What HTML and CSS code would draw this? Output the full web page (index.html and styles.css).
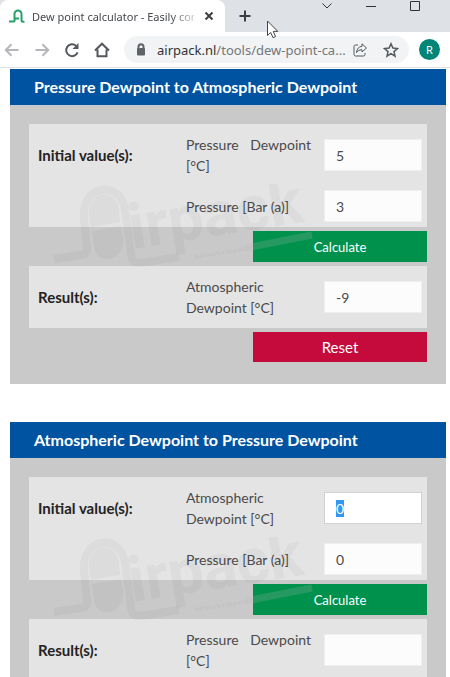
FILE: index.html
```html
<!DOCTYPE html>
<html lang="en">
<head>
<meta charset="utf-8">
<meta name="viewport" content="width=device-width, initial-scale=1">
<title>Dew point calculator</title>
<link rel="stylesheet" href="styles.css">
</head>
<body>
<header class="browser">
  <div class="tabstrip">
    <div class="tab">
      <svg class="favicon" viewBox="0 0 16 16" aria-hidden="true"><path d="M0 13.500h4.500Q6 13.500 5.500 11.500V6a3.500 3.500 0 0 1 7 0v6.500q0 1.500 3 1.200M5.500 10.500h4.500"/></svg>
      <span class="tab-title">Dew point calculator - Easily con</span>
      <button class="icon-button tab-close" aria-label="Close tab"><svg viewBox="0 0 16 16"><path d="M4.500 4.500l7 7M11.500 4.500l-7 7"/></svg></button>
    </div>
    <button class="icon-button new-tab" aria-label="New tab"><svg viewBox="0 0 16 16"><path d="M8 2.500v11M2.500 8h11"/></svg></button>
    <div class="window-controls">
      <button class="icon-button" aria-label="Search tabs"><svg viewBox="0 0 16 16"><path d="M3.500 5.500L8 10l4.500-4.500"/></svg></button>
      <button class="icon-button" aria-label="Minimize"><svg viewBox="0 0 16 16"><path d="M3 8.500h10"/></svg></button>
      <button class="icon-button" aria-label="Maximize"><svg viewBox="0 0 16 16"><path d="M3.500 3.500h9v9h-9z"/></svg></button>
    </div>
    <svg class="pointer" viewBox="0 0 14 20" aria-hidden="true"><path d="M1.500 1v14.500l3.200-3 2.300 5.200 2.600-1.100-2.300-5.200h4.500z"/></svg>
  </div>
  <nav class="toolbar" aria-label="Browser">
    <button class="icon-button nav-button muted" aria-label="Back"><svg viewBox="0 0 16 16"><path d="M14.500 8H2M7.500 2.300L1.800 8l5.700 5.700"/></svg></button>
    <button class="icon-button nav-button muted" aria-label="Forward"><svg viewBox="0 0 16 16"><path d="M1.500 8H14M8.500 2.300L14.200 8l-5.700 5.700"/></svg></button>
    <button class="icon-button nav-button" aria-label="Reload"><svg viewBox="0 0 16 16"><path class="bold" d="M13.600 10.300A5.900 5.900 0 1 1 12 3.800"/><path class="solid" d="M14.500 1v6H8.500z"/></svg></button>
    <button class="icon-button nav-button" aria-label="Home"><svg viewBox="0 0 16 16"><path class="bold" d="M1 8.500L8 1.700l7 6.800M3.500 7.500v6.700h9V7.500"/></svg></button>
    <div class="address">
      <svg class="lock" viewBox="0 0 10 14" aria-hidden="true"><path class="shackle" d="M2.500 6V3.800a2.500 2.500 0 0 1 5 0V6"/><rect x="1" y="5" width="8" height="7.500" rx="1"/></svg>
      <span class="url"><span class="host">airpack.nl</span>/tools/dew-point-ca...</span>
      <button class="icon-button" aria-label="Share"><svg viewBox="0 0 16 16"><path d="M6 3H3.500Q2 3 2 4.500v8Q2 14 3.500 14h8q1.500 0 1.500-1.500V11M10 1.800L14.500 6 10 10V7.700Q6.500 7.500 4.500 10.500 5 5 10 4.300z"/></svg></button>
      <button class="icon-button" aria-label="Bookmark"><svg viewBox="0 0 16 16"><path class="star" d="M8 1.800l1.900 4.300 4.600.4L11 9.600l1 4.600-4-2.500-4 2.500 1-4.600-3.500-3.100 4.600-.4z"/></svg></button>
    </div>
    <button class="avatar" aria-label="Profile">R</button>
  </nav>
</header>

<svg class="symbols" aria-hidden="true">
  <symbol id="watermark" viewBox="0 0 270 84">
    <path class="mark-line" d="M2 75L29 71Q36 70 35 63L32 35C29 1 67-5 73 25L79 70Q80 80 88 79L127 73"/>
    <path class="mark-fill" d="M39 43L37 31C36 5 66 4 67 27L68 38zM40 47L69 42 71 55C73 78 44 82 42 63z"/>
    <text class="mark-word" transform="translate(80 65) rotate(-9)">irpack</text>
    <text class="mark-tag" transform="translate(143 75) rotate(-9)">Networks brands</text>
    <path class="mark-bar" d="M194 64L260 51"/>
  </symbol>
</svg>

<main class="page">
  <form class="panel">
    <h2 class="panel-title">Pressure Dewpoint to Atmospheric Dewpoint</h2>
    <div class="panel-body">
      <fieldset class="group initial" aria-labelledby="p-init">
        <div class="group-name" id="p-init">Initial value(s):</div>
        <div class="fields">
          <div class="field"><label for="p1">Pressure Dewpoint [°C]</label><input id="p1" value="5"></div>
          <div class="field"><label for="p2">Pressure [Bar (a)]</label><input id="p2" value="3"></div>
        </div>
      </fieldset>
      <button type="button" class="action calculate">Calculate</button>
      <fieldset class="group" aria-labelledby="p-res">
        <div class="group-name" id="p-res">Result(s):</div>
        <div class="fields">
          <div class="field"><label for="p3">Atmospheric Dewpoint [°C]</label><input id="p3" value="-9"></div>
        </div>
      </fieldset>
      <button type="reset" class="action reset">Reset</button>
      <svg class="watermark" aria-hidden="true"><use href="#watermark"/></svg>
    </div>
  </form>

  <form class="panel">
    <h2 class="panel-title">Atmospheric Dewpoint to Pressure Dewpoint</h2>
    <div class="panel-body">
      <fieldset class="group initial" aria-labelledby="a-init">
        <div class="group-name" id="a-init">Initial value(s):</div>
        <div class="fields">
          <div class="field"><label for="a1">Atmospheric Dewpoint [°C]</label><input id="a1" class="current" value="0"></div>
          <div class="field"><label for="a2">Pressure [Bar (a)]</label><input id="a2" value="0"></div>
        </div>
      </fieldset>
      <button type="button" class="action calculate">Calculate</button>
      <fieldset class="group" aria-labelledby="a-res">
        <div class="group-name" id="a-res">Result(s):</div>
        <div class="fields">
          <div class="field"><label for="a3">Pressure Dewpoint [°C]</label><input id="a3" value=""></div>
        </div>
      </fieldset>
      <svg class="watermark" aria-hidden="true"><use href="#watermark"/></svg>
    </div>
  </form>
</main>
<script src="script.js"></script>
</body>
</html>
```
FILE: styles.css
```css
* { box-sizing: border-box; }
html { height: 100%; }
body {
  margin: 0;
  height: 100%;
  overflow: hidden;
  display: flex;
  flex-direction: column;
  background: #fff;
  font-family: Lato, "Liberation Sans", sans-serif;
  color: #4a4a4a;
}
button { font-family: inherit; border: 0; padding: 0; }
.symbols { display: none; }

.browser { flex: none; font-family: "Noto Sans", sans-serif; border-bottom: 1px solid #dfe1e5; }
.tabstrip { position: relative; display: flex; height: 32px; background: #dee1e6; }
.tab {
  display: flex;
  align-items: center;
  gap: 7px;
  width: 225px;
  padding: 0 8px 0 9px;
  background: #fff;
  border-radius: 8px 8px 0 0;
}
.favicon { flex: none; width: 16px; height: 16px; fill: none; stroke: #27a06a; stroke-width: 2; }
.tab-title {
  flex: 1;
  min-width: 0;
  white-space: nowrap;
  font-size: 11px;
  color: #45484d;
  mask-image: linear-gradient(to right, #000 85%, transparent 105%);
}
.icon-button { flex: none; width: 16px; height: 16px; background: none; }
.icon-button svg { display: block; width: 100%; height: 100%; fill: none; stroke: #55585c; stroke-width: 1; }
.icon-button .bold { stroke-width: 2; }
.icon-button .solid { fill: #55585c; stroke: none; }
.icon-button .star { stroke-width: 1.5; }
.tab-close svg, .new-tab svg { stroke: #3c4043; stroke-width: 2; }
.new-tab { margin: 8px 0 0 12px; }
.window-controls { display: flex; gap: 28px; margin: -2px 27px 0 auto; }
.window-controls svg { stroke: #333; }
.pointer {
  position: absolute;
  left: 59%;
  top: 20px;
  width: 14px;
  height: 20px;
  fill: #fff;
  stroke: #444;
}

.toolbar { display: flex; align-items: center; height: 35px; padding: 0 10px 0 4px; background: #fff; }
.nav-button { margin-right: 14px; }
.muted svg { stroke: #b4b6b9; stroke-width: 2; }
.address {
  flex: 1;
  min-width: 0;
  display: flex;
  align-items: center;
  gap: 15px;
  height: 27px;
  padding: 0 10px 0 12px;
  border-radius: 14px;
  background: #f1f3f4;
}
.lock { flex: none; width: 10px; height: 14px; fill: #5f6368; }
.lock .shackle { fill: none; stroke: #5f6368; stroke-width: 2; }
.url { flex: 1; white-space: nowrap; font-size: 13px; color: #74787c; margin-right: -10px; margin-left: -4px; }
.host { color: #303336; }
.avatar {
  flex: none;
  width: 21px;
  height: 21px;
  margin-left: 10px;
  border-radius: 50%;
  background: #008577;
  color: #fff;
  font-size: 11px;
}

.page { flex: 1; min-height: 0; overflow: hidden; padding: 1px 4px 0 10px; }
.panel { margin: 0 0 38px; background: #c9c9c9; }
.panel-title {
  margin: 0;
  padding: 0 24px;
  font-size: 16px;
  line-height: 36px;
  font-weight: 700;
  color: #fff;
  white-space: nowrap;
  background: #0053a1;
}
.panel-body { position: relative; display: flex; flex-direction: column; gap: 4px; padding: 19px 19px 22px; }
.group {
  display: flex;
  margin: 0;
  min-width: 0;
  border: 0;
  padding: 10px 5px 10px 9px;
  background: #e4e4e4;
}
.initial { padding-bottom: 5px; }
.group-name { flex: 0 0 148px; padding-top: 10px; font-size: 15px; line-height: 22px; font-weight: 700; color: #222; }
.fields { flex: 1; display: flex; flex-direction: column; gap: 14px; }
.field { display: flex; align-items: center; gap: 13px; }
.field label { flex: 1; font-size: 14px; line-height: 21px; text-align: justify; }
.field input {
  flex: none;
  width: 98px;
  height: 32px;
  padding: 0 11px;
  border: 1px solid #efefef;
  border-radius: 0;
  outline: 0;
  background: #fcfcfc;
  font-family: inherit;
  font-size: 14px;
  color: #4a4a4a;
}
.field .current { background: #fff; border-color: #d2d2d2; }
.field input::selection { background: #3399f0; color: #fff; }
.action { align-self: flex-end; width: 174px; height: 30px; color: #fff; }
.calculate { height: 31px; background: #00924c; font-size: 13px; }
.reset { background: #c50b3c; font-size: 15px; }

.watermark { position: absolute; left: 42px; top: 79px; width: 270px; height: 84px; pointer-events: none; }
.mark-line { fill: none; stroke: #222; stroke-opacity: 0.04; stroke-width: 8; }
.mark-fill { fill: #222; fill-opacity: 0.04; }
.mark-word { font: 700 63px Roboto, sans-serif; fill: #222; fill-opacity: 0.04; }
.mark-tag { font: 700 7px Roboto, sans-serif; fill: #222; fill-opacity: 0.06; }
.mark-bar { fill: none; stroke: #bbb; stroke-opacity: 0.2; stroke-width: 7; }
```
FILE: script.js
```js
const current = document.querySelector('.current');
current.focus({ preventScroll: true });
current.select();
```
